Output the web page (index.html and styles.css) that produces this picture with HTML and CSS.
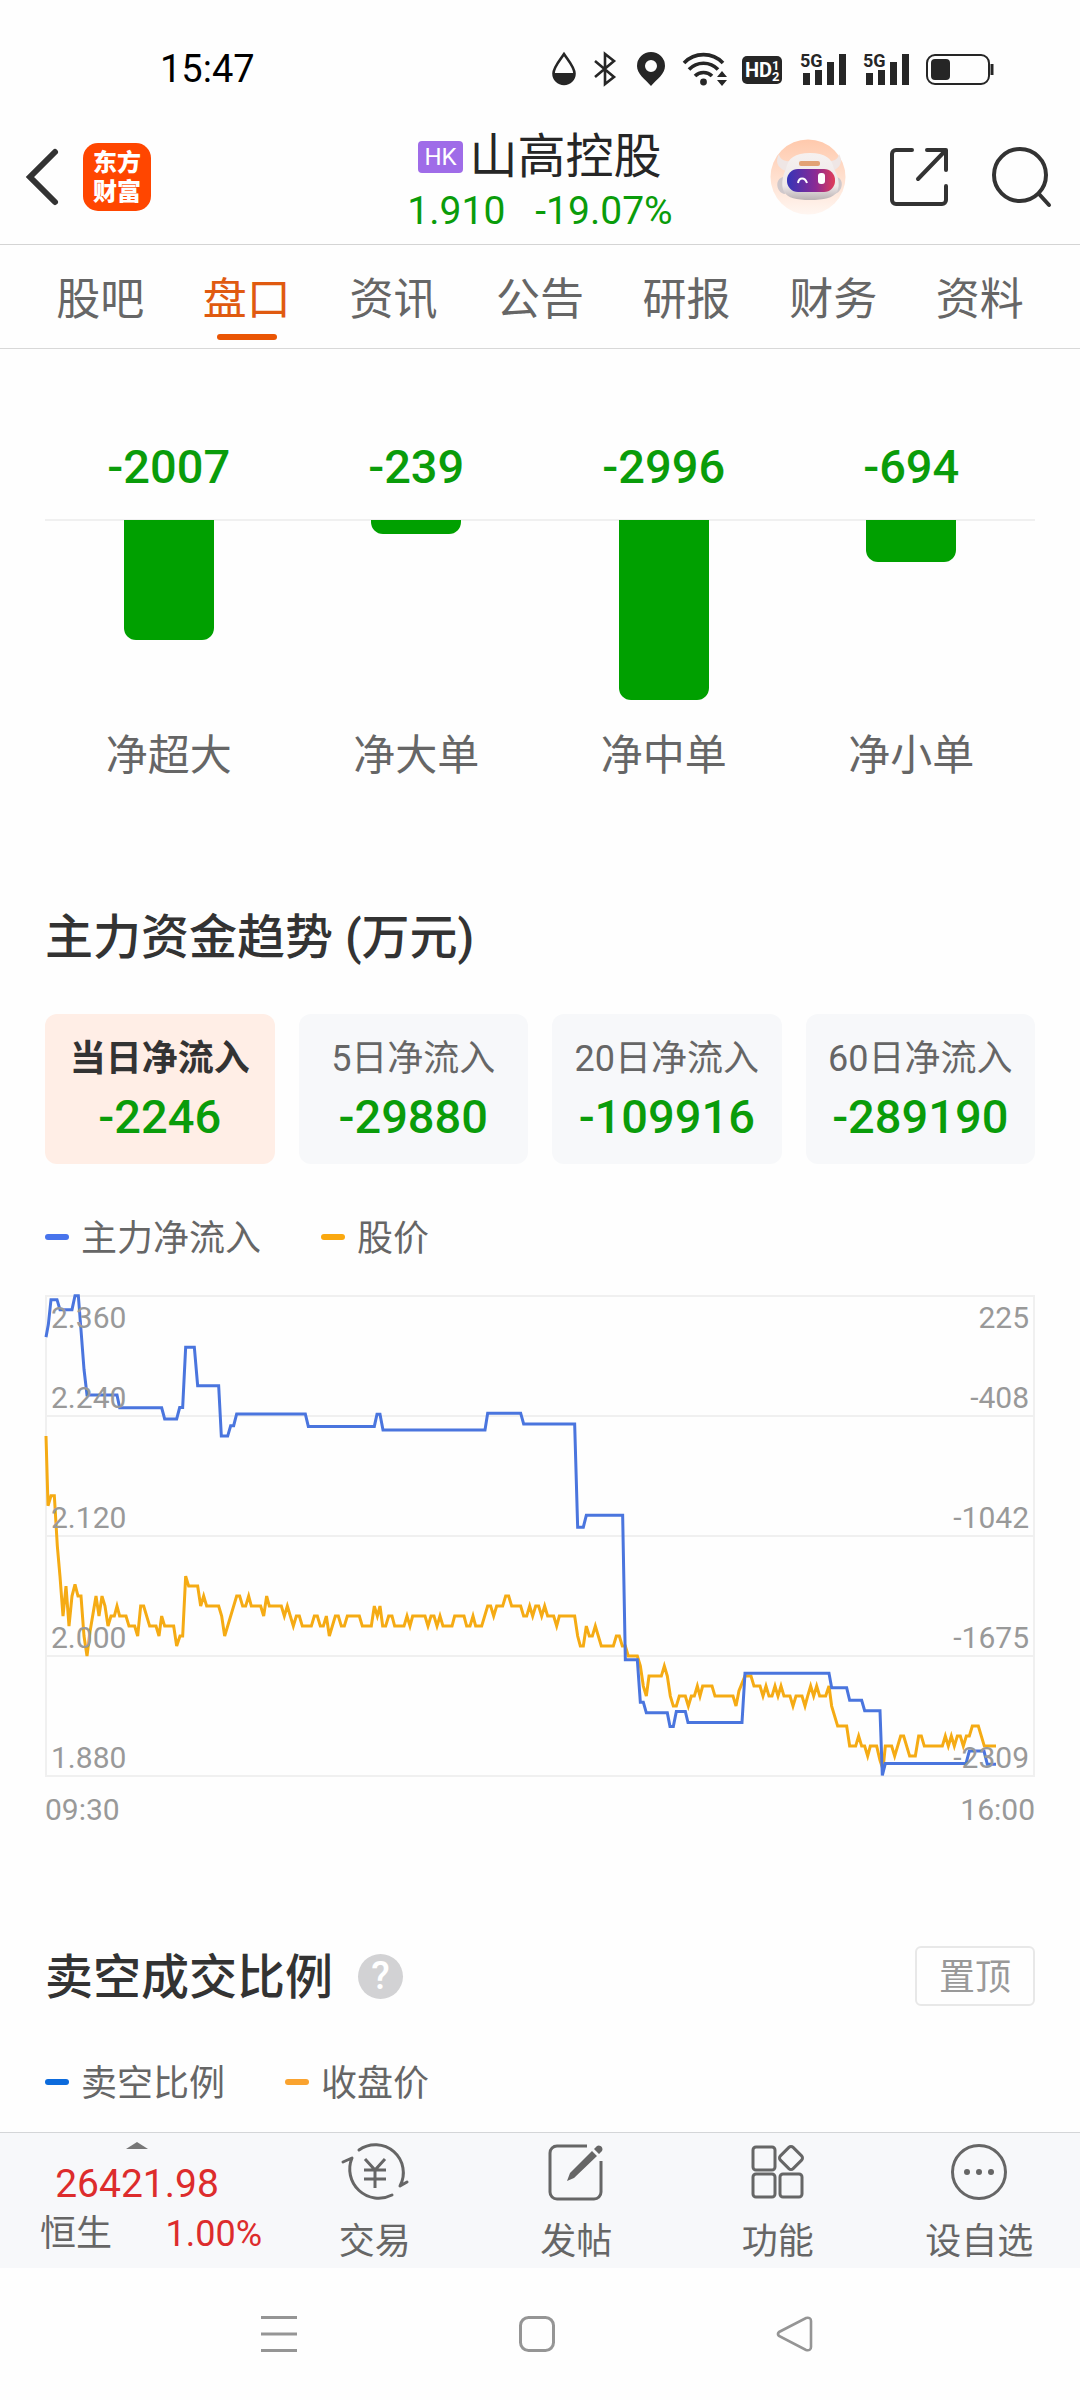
FILE: index.html
```
<!DOCTYPE html>
<html lang="zh-CN">
<head>
    <meta charset="UTF-8">
    <meta name="viewport" content="width=device-width, initial-scale=1.0">
    <title>山高控股 - 东方财富</title>
    <link rel="stylesheet" href="styles.css">
</head>
<body>
    <div class="status-bar">
        <span class="time">15:47</span>
        <div class="status-icons">
            <svg width="24" height="34" viewBox="0 0 24 34"><path d="M12 2C8 8 1.500 15 1.500 21.500a10.500 10.500 0 0 0 21 0C22.500 15 16 8 12 2z" fill="none" stroke="#262626" stroke-width="2.600"/><path d="M1 21h22a11 11 0 0 1-22 0z" fill="#262626"/></svg>
            <svg class="bluetooth" width="22" height="34" viewBox="0 0 22 34"><path d="M1 9l19 16-9 7V2l9 7L1 25" fill="none" stroke="#262626" stroke-width="2.600"/></svg>
            <svg width="28" height="34" viewBox="0 0 28 34"><path d="M14 0a14 14 0 0 0-14 14c0 8 8 13 14 20 6-7 14-12 14-20A14 14 0 0 0 14 0zm0 8a6 6 0 1 1 0 12 6 6 0 0 1 0-12z" fill="#262626" fill-rule="evenodd"/></svg>
            <svg class="wifi" width="44" height="34" viewBox="0 0 44 34"><g fill="none" stroke="#262626" stroke-width="3.600"><path d="M1 11a27 27 0 0 1 39 0"/><path d="M6 17.500a20 20 0 0 1 29 0"/><path d="M12 24a12 12 0 0 1 17 0"/></g><circle cx="20.500" cy="30" r="3.400" fill="#262626"/><path d="M34 25l5-6 5 6zM34 28l5 6 5-6z" fill="#262626"/></svg>
            <svg width="40" height="34" viewBox="0 0 40 34"><rect y="4" width="40" height="28" rx="5" fill="#262626"/><text x="3" y="25" class="hd">HD</text><text x="30" y="18" class="hd-small">1</text><text x="30" y="29" class="hd-small">2</text></svg>
            <svg class="signal" width="46" height="34" viewBox="0 0 46 34"><text x="0" y="15" class="net">5G</text><path d="M3 21h7v12H3zM15 18h7v15h-7zM27 10h7v23h-7zM39 2h7v31h-7z" fill="#262626"/></svg>
            <svg class="signal" width="46" height="34" viewBox="0 0 46 34"><text x="0" y="15" class="net">5G</text><path d="M3 21h7v12H3zM15 18h7v15h-7zM27 10h7v23h-7zM39 2h7v31h-7z" fill="#262626"/></svg>
            <svg width="68" height="34" viewBox="0 0 68 34"><rect x="1" y="3" width="62" height="29" rx="8" fill="none" stroke="#262626" stroke-width="2"/><rect x="5" y="7" width="19" height="21" rx="4" fill="#262626"/><path d="M66 12v11" stroke="#262626" stroke-width="3"/></svg>
        </div>
    </div>

    <header class="header">
        <div class="header-left">
            <button type="button" class="icon-button" aria-label="返回">
                <svg width="32" height="56" viewBox="2 0 32 56"><path d="M29 3L4 28l25 25" fill="none" stroke="#333" stroke-width="6" stroke-linecap="round"/></svg>
            </button>
            <a href="#" class="logo">东方<br>财富</a>
        </div>
        <div class="header-title">
            <h1><span class="market">HK</span>山高控股</h1>
            <p class="quote"><span>1.910</span><span>-19.07%</span></p>
        </div>
        <div class="header-right">
            <button type="button" class="icon-button" aria-label="智能助手">
                <svg width="76" height="76" viewBox="0 0 76 76">
                    <defs>
                        <linearGradient id="halo" x1="0" y1="0" x2="0" y2="1"><stop offset="0" stop-color="#ffc9ac"/><stop offset="1" stop-color="#fff6f1"/></linearGradient>
                        <linearGradient id="visor" x1="0" y1="0" x2="1" y2="0"><stop offset="0" stop-color="#3434b8"/><stop offset=".6" stop-color="#8b2a94"/><stop offset="1" stop-color="#e03c58"/></linearGradient>
                        <linearGradient id="helmet" x1="0" y1="0" x2="0" y2="1"><stop offset="0" stop-color="#f6f1f0"/><stop offset=".7" stop-color="#eee8e8"/><stop offset="1" stop-color="#b9b1b3"/></linearGradient>
                    </defs>
                    <circle cx="38" cy="38" r="37.500" fill="url(#halo)"/>
                    <path d="M9 15c-4 7-2 14 7 17l7-10c-8 1-13-1-14-7zM69 15c4 7 2 14-7 17l-7-10c8 1 13-1 14-7z" fill="#efe6e5"/>
                    <path d="M14 38c-10 1-8 16 1 17zM66 38c9 1 7 16-2 17z" fill="#cfc8cb"/>
                    <path d="M16 30c2-11 9-16 24-16s22 5 24 16c5 8 6 17 3 23-4 6-13 8-27 8s-22-2-26-8c-3-6-2-15 2-23z" fill="url(#helmet)"/>
                    <rect x="29" y="22" width="21" height="5" rx="2" fill="#e2a275"/>
                    <rect x="17" y="30" width="48" height="23" rx="11" fill="url(#visor)"/>
                    <path d="M28 44c1-6 7-6 9 0" fill="none" stroke="#fff" stroke-width="2"/>
                    <rect x="48" y="34" width="7" height="11" rx="3" fill="#fff"/>
                </svg>
            </button>
            <button type="button" class="icon-button" aria-label="分享">
                <svg width="58" height="58" viewBox="0 0 58 58"><g fill="none" stroke="#333" stroke-width="4" stroke-linecap="round" stroke-linejoin="round"><path d="M22 2H6a4 4 0 0 0-4 4v46a4 4 0 0 0 4 4h46a4 4 0 0 0 4-4V38"/><path d="M37 2h19v20M55 3L28 31"/></g></svg>
            </button>
            <button type="button" class="icon-button" aria-label="搜索">
                <svg width="60" height="60" viewBox="0 0 60 60"><g fill="none" stroke="#333" stroke-width="4" stroke-linecap="round"><circle cx="28" cy="28" r="26"/><path d="M47 47l10 11"/></g></svg>
            </button>
        </div>
    </header>

    <nav class="tabs">
        <a href="#">股吧</a>
        <a href="#" class="active">盘口</a>
        <a href="#">资讯</a>
        <a href="#">公告</a>
        <a href="#">研报</a>
        <a href="#">财务</a>
        <a href="#">资料</a>
    </nav>

    <main>
        <section class="flow-bars">
            <div class="flow-col">
                <strong>-2007</strong>
                <div class="plot"><div class="bar" style="height: 120px"></div></div>
                <span>净超大</span>
            </div>
            <div class="flow-col">
                <strong>-239</strong>
                <div class="plot"><div class="bar" style="height: 14px"></div></div>
                <span>净大单</span>
            </div>
            <div class="flow-col">
                <strong>-2996</strong>
                <div class="plot"><div class="bar" style="height: 180px"></div></div>
                <span>净中单</span>
            </div>
            <div class="flow-col">
                <strong>-694</strong>
                <div class="plot"><div class="bar" style="height: 42px"></div></div>
                <span>净小单</span>
            </div>
        </section>

        <section class="trend">
            <h2>主力资金趋势 (万元)</h2>
            <div class="cards">
                <button type="button" class="card active"><span>当日净流入</span><strong>-2246</strong></button>
                <button type="button" class="card"><span>5日净流入</span><strong>-29880</strong></button>
                <button type="button" class="card"><span>20日净流入</span><strong>-109916</strong></button>
                <button type="button" class="card"><span>60日净流入</span><strong>-289190</strong></button>
            </div>
            <div class="legend">
                <span class="key blue">主力净流入</span>
                <span class="key yellow">股价</span>
            </div>
            <svg class="chart" viewBox="0 0 990 550">
                <path class="grid" d="M1 6H989V486H1zM1 126H989M1 246H989M1 366H989"/>
                <!-- one minute is 9 units wide, one price tick is 28 units high -->
                <g class="lines" transform="translate(-15 -10) scale(.33333 .35714)">
                    <polyline class="price" points="48,437 54,632 63,604 73,604 82,745 90,830 99,941 108,857 117,969 126,885 135,852 144,885 153,885 162,997 171,1053 180,985 198,885 207,941 216,885 225,913 234,969 243,941 253,941 261,913 269,941 288,941 297,969 314,969 323,997 332,913 341,913 359,969 378,969 387,997 395,941 404,969 431,969 440,1025 450,997 458,997 467,829 476,857 503,857 512,913 521,885 530,913 566,913 575,941 584,997 620,885 629,885 638,913 647,913 656,885 664,913 692,913 701,941 710,885 718,913 754,913 763,941 772,913 790,969 799,941 808,941 817,969 844,969 853,941 862,941 871,969 880,969 889,941 898,997 916,941 925,941 934,969 943,969 952,941 988,941 997,969 1024,969 1033,913 1042,941 1050,913
                        1058,969 1067,969 1076,941 1086,941 1094,969 1122,969 1131,941 1140,969 1148,941 1185,941 1194,969 1203,941 1212,941 1221,969 1230,941 1239,969 1266,969 1274,941 1302,941 1310,969 1320,969 1329,941 1337,969 1355,969 1373,913 1382,913 1391,941 1400,913 1418,913 1427,885 1436,885 1445,913 1472,913 1481,941 1490,941 1499,913 1508,941 1517,913 1526,913 1535,941 1544,913 1553,941 1571,941 1580,969 1588,941 1634,941 1643,997 1651,1025 1660,1025 1669,969 1678,997 1687,997 1696,969 1714,1025 1750,1025 1759,997 1768,997 1777,1025 1786,1025 1795,1053 1822,1053 1831,1080 1840,1137 1849,1165 1857,1109 1894,1109 1903,1081 1912,1109 1921,1165 1930,1193 1939,1193 1948,1165 1966,1165 1975,1193 1984,1165 1993,1165 2002,1137 2010,1165 2018,1137 2046,1137 2055,1165
                        2109,1165 2118,1193 2127,1150 2145,1109 2163,1109 2172,1137 2190,1137 2199,1165 2208,1137 2217,1165 2226,1165 2235,1137 2244,1165 2253,1137 2262,1165 2280,1165 2289,1193 2298,1165 2316,1165 2325,1193 2333,1165 2342,1137 2351,1165 2360,1137 2369,1165 2387,1165 2397,1137 2405,1193 2423,1249 2450,1249 2459,1305 2477,1305 2486,1277 2495,1305 2504,1305 2513,1333 2521,1305 2540,1305 2550,1345 2559,1370 2566,1305 2585,1305 2594,1333 2612,1277 2621,1277 2639,1333 2656,1333 2666,1277 2674,1277 2683,1305 2737,1305 2746,1277 2755,1305 2764,1277 2773,1305 2782,1277 2791,1277 2800,1305 2809,1277 2818,1277 2827,1249 2845,1249 2863,1305 2898,1305"/>
                    <polyline class="inflow" points="48,160 55,125 63,55 81,55 90,83 126,83 135,44 145,44 153,140 162,250 171,322 261,322 269,358 395,358 404,389 440,389 449,357 458,357 467,188 493,188 503,296 566,296 574,437 593,437 602,408 611,408 620,375 826,375 835,410 1033,410 1041,376 1050,376
                        1059,420 1365,420 1373,373 1472,373 1481,403 1634,403 1643,692 1660,692 1669,659 1778,659 1786,1063 1822,1063 1831,1182 1840,1182 1849,1212 1912,1212 1920,1250 1930,1250 1939,1208 1966,1208 1974,1239 2136,1239 2145,1101 2397,1101 2405,1142 2450,1142 2459,1177 2495,1177 2504,1206 2550,1206 2557,1387 2566,1354 2808,1354 2818,1319 2862,1319 2872,1356 2898,1356"/>
                </g>
                <g class="axis">
                    <text x="6" y="38">2.360</text>
                    <text x="6" y="118">2.240</text>
                    <text x="6" y="238">2.120</text>
                    <text x="6" y="358">2.000</text>
                    <text x="6" y="478">1.880</text>
                    <text x="0" y="530">09:30</text>
                </g>
                <g class="axis right">
                    <text x="984" y="38">225</text>
                    <text x="984" y="118">-408</text>
                    <text x="984" y="238">-1042</text>
                    <text x="984" y="358">-1675</text>
                    <text x="984" y="478">-2309</text>
                    <text x="990" y="530">16:00</text>
                </g>
            </svg>
        </section>

        <section class="short">
            <div class="section-head">
                <h2>卖空成交比例</h2>
                <button type="button" class="help" aria-label="说明">?</button>
                <button type="button" class="pin">置顶</button>
            </div>
            <div class="legend">
                <span class="key navy">卖空比例</span>
                <span class="key orange">收盘价</span>
            </div>
        </section>
    </main>

    <footer class="toolbar">
        <a href="#" class="index">
            <svg width="22" height="7" viewBox="0 0 22 7"><path d="M0 7L11 0l11 7z" fill="#777"/></svg>
            <span class="index-value">26421.98</span>
            <span class="index-row"><span>恒生</span><span class="index-change">1.00%</span></span>
        </a>
        <a href="#" class="tool">
            <svg width="66" height="60" viewBox="0 0 66 60"><g fill="none" stroke="#666" stroke-width="3" stroke-linecap="round" stroke-linejoin="round"><path d="M17 8a28 28 0 0 1 41 36l7-4"/><path d="M1 20l9-4a29 29 0 0 0 40 37"/></g><path d="M23 17l10 11 10-11M33 28v18M22 28h22M22 37h22" fill="none" stroke="#666" stroke-width="3"/></svg>
            <span>交易</span>
        </a>
        <a href="#" class="tool">
            <svg width="56" height="60" viewBox="0 0 56 60"><path d="M39 4H9a7 7 0 0 0-7 7v39a7 7 0 0 0 7 7h37a7 7 0 0 0 7-7V19" fill="none" stroke="#666" stroke-width="3"/><path d="M19 39l3-8 22-22 5 5-23 22zM46 7l3-3c3-2 7 2 5 5l-3 3z" fill="#666"/></svg>
            <span>发帖</span>
        </a>
        <a href="#" class="tool">
            <svg width="56" height="60" viewBox="0 0 56 60"><g fill="none" stroke="#666" stroke-width="3"><rect x="3" y="5" width="22" height="23" rx="3"/><rect x="3" y="32" width="22" height="23" rx="3"/><rect x="30" y="32" width="22" height="23" rx="3"/><rect x="32" y="7" width="18" height="18" rx="3" transform="rotate(45 41 16)"/></g></svg>
            <span>功能</span>
        </a>
        <a href="#" class="tool">
            <svg width="60" height="60" viewBox="0 0 60 60"><circle cx="30" cy="30" r="26.500" fill="none" stroke="#666" stroke-width="3"/><g fill="#666"><circle cx="18" cy="30" r="3"/><circle cx="30" cy="30" r="3"/><circle cx="42" cy="30" r="3"/></g></svg>
            <span>设自选</span>
        </a>
    </footer>

    <div class="system-nav">
        <svg width="36" height="36" viewBox="0 0 36 36"><path d="M0 1.500h36M0 18h36M0 34.500h36" stroke="#959595" stroke-width="3"/></svg>
        <svg width="36" height="36" viewBox="0 0 36 36"><rect x="1.500" y="1.500" width="33" height="33" rx="8" fill="none" stroke="#959595" stroke-width="3"/></svg>
        <svg width="36" height="36" viewBox="0 0 36 36"><path d="M2 16L29 2q5-1 5 3v26q0 4-5 3L2 20q-2-2 0-4z" fill="none" stroke="#959595" stroke-width="2.600"/></svg>
    </div>
</body>
</html>
```

FILE: styles.css
```
* {
    box-sizing: border-box;
}

body {
    margin: 0;
    min-height: 100vh;
    display: flex;
    flex-direction: column;
    background-color: #fefefe;
    color: #333;
    font-family: Roboto, "Noto Sans CJK SC", sans-serif;
}

h1, h2, p {
    margin: 0;
}

a {
    color: inherit;
    text-decoration: none;
}

button {
    font-family: inherit;
    border: none;
    padding: 0;
    background: none;
    cursor: pointer;
}

svg {
    display: block;
    overflow: visible;
}

/* status bar */
.status-bar {
    height: 110px;
    padding: 28px 86px 0 160px;
    display: flex;
    justify-content: space-between;
    align-items: center;
}

.time {
    font-size: 38px;
    color: #000;
}

.status-icons {
    display: flex;
    align-items: center;
    gap: 18px;
}

.bluetooth {
    margin-right: 3px;
}

.wifi {
    margin-right: -3px;
}

.signal {
    margin-right: -1px;
}

.hd {
    font-size: 20px;
    font-weight: 700;
    fill: #fff;
}

.hd-small {
    font-size: 13px;
    font-weight: 700;
    fill: #fff;
}

.net {
    font-size: 18px;
    font-weight: 700;
    fill: #262626;
}

/* header */
.header {
    height: 135px;
    padding: 0 28px;
    display: grid;
    grid-template-columns: 1fr auto 1fr;
    align-items: center;
    border-bottom: 1px solid #d4d4d4;
}

.header-left {
    display: flex;
    align-items: center;
    gap: 23px;
}

.header-right {
    display: flex;
    justify-content: flex-end;
    align-items: center;
    gap: 44px;
}

.logo {
    width: 68px;
    height: 68px;
    padding-top: 6px;
    border-radius: 15px;
    background-color: #ff4600;
    color: #fff;
    font-size: 24px;
    font-weight: 900;
    line-height: 29px;
    text-align: center;
}

.header-title {
    padding-top: 14px;
    text-align: center;
}

.header-title h1 {
    display: flex;
    justify-content: center;
    align-items: center;
    gap: 7px;
    font-size: 48px;
    font-weight: 400;
    line-height: 55px;
    color: #262626;
}

.market {
    padding: 0 6px;
    border-radius: 4px;
    background-color: #9f6ce8;
    color: #fff;
    font-size: 24px;
    line-height: 32px;
}

.quote {
    display: flex;
    justify-content: center;
    gap: 30px;
    font-size: 39px;
    line-height: 55px;
    color: #0a9c0a;
}

/* tabs */
.tabs {
    height: 104px;
    padding: 0 27px;
    display: flex;
    border-bottom: 1px solid #d8d8d8;
}

.tabs a {
    flex: 1;
    position: relative;
    padding-top: 6px;
    font-size: 44px;
    line-height: 98px;
    text-align: center;
    color: #666;
}

.tabs .active {
    color: #e05a10;
}

.tabs .active::after {
    content: "";
    position: absolute;
    left: calc(50% - 30px);
    bottom: 8px;
    width: 60px;
    height: 6px;
    border-radius: 3px;
    background-color: #ea5504;
}

main {
    flex: 1;
    padding: 88px 45px 20px;
}

/* net flow by order size */
.flow-bars {
    display: flex;
}

.flow-col {
    flex: 1;
    display: flex;
    flex-direction: column;
    text-align: center;
}

.flow-col strong {
    margin-bottom: 22px;
    font-size: 47px;
    font-weight: 500;
    line-height: 60px;
    color: #0a9c0a;
}

.plot {
    height: 207px;
    border-top: 2px solid #f0f0f0;
}

.bar {
    width: 90px;
    margin: -1px auto 0;
    border-radius: 0 0 12px 12px;
    background-color: #00a000;
}

.flow-col span {
    font-size: 42px;
    line-height: 60px;
    color: #666;
}

/* trend */
h2 {
    font-size: 48px;
    font-weight: 500;
    line-height: 60px;
}

.trend {
    margin-top: 122px;
}

.cards {
    margin-top: 46px;
    display: flex;
    gap: 24px;
}

.card {
    flex: 1;
    height: 150px;
    border-radius: 12px;
    background-color: #f7f8fa;
    color: #666;
}

.card.active {
    background-color: #ffeee6;
    color: #333;
}

.card span {
    display: block;
    font-size: 36px;
    line-height: 56px;
}

.card.active span {
    font-weight: 700;
}

.card strong {
    display: block;
    font-size: 47px;
    font-weight: 500;
    line-height: 60px;
    color: #0a9c0a;
}

.legend {
    margin-top: 51px;
    display: flex;
    gap: 60px;
}

.key {
    display: flex;
    align-items: center;
    gap: 12px;
    font-size: 36px;
    line-height: 48px;
    color: #666;
}

.key::before {
    content: "";
    width: 24px;
    height: 6px;
    margin-bottom: 4px;
    border-radius: 3px;
    background-color: currentColor;
}

.blue::before {
    background-color: #4874ec;
}

.yellow::before {
    background-color: #faa80f;
}

.navy::before {
    background-color: #0d6bdc;
}

.orange::before {
    background-color: #faa32f;
}

.chart {
    width: 100%;
    margin-top: 27px;
}

.grid {
    fill: none;
    stroke: #f0f0f0;
    stroke-width: 2;
}

.lines polyline {
    fill: none;
    stroke-width: 3px;
    vector-effect: non-scaling-stroke;
}

.price {
    stroke: #f5ab14;
}

.inflow {
    stroke: #4a75de;
}

.axis {
    font-size: 30px;
    fill: #999;
}

.right {
    text-anchor: end;
}

/* short selling */
.short {
    margin-top: 104px;
}

.short .legend {
    margin-top: 52px;
}

.section-head {
    display: flex;
    align-items: center;
}

.section-head h2 {
    padding-top: 4px;
}

.help {
    width: 45px;
    height: 45px;
    margin-left: 25px;
    border-radius: 50%;
    background-color: #d2d2d4;
    color: #fff;
    font-size: 38px;
    font-weight: 500;
    line-height: 45px;
}

.pin {
    width: 120px;
    height: 60px;
    padding-top: 4px;
    margin-left: auto;
    border: 2px solid #e8e8e8;
    border-radius: 6px;
    font-size: 36px;
    line-height: 52px;
    color: #999;
}

/* bottom toolbar */
.toolbar {
    height: 136px;
    display: flex;
    border-top: 1px solid #d4d6d8;
    background-color: #f7f8fa;
    color: #666;
    font-size: 36px;
}

.index {
    width: 274px;
    padding-top: 9px;
    display: flex;
    flex-direction: column;
    align-items: center;
}

.index-value {
    padding-top: 11px;
    font-size: 39px;
    line-height: 48px;
    color: #dd2c2c;
}

.index-row {
    align-self: stretch;
    padding: 2px 12px 0 40px;
    display: flex;
    justify-content: space-between;
    line-height: 48px;
}

.index-change {
    color: #dd2c2c;
}

.tool {
    flex: 1;
    padding-top: 9px;
    display: flex;
    flex-direction: column;
    align-items: center;
    line-height: 48px;
}

.tool span {
    padding-top: 16px;
}

/* system navigation */
.system-nav {
    height: 132px;
    padding-right: 6px;
    display: flex;
    justify-content: center;
    align-items: center;
    gap: 222px;
}
```
